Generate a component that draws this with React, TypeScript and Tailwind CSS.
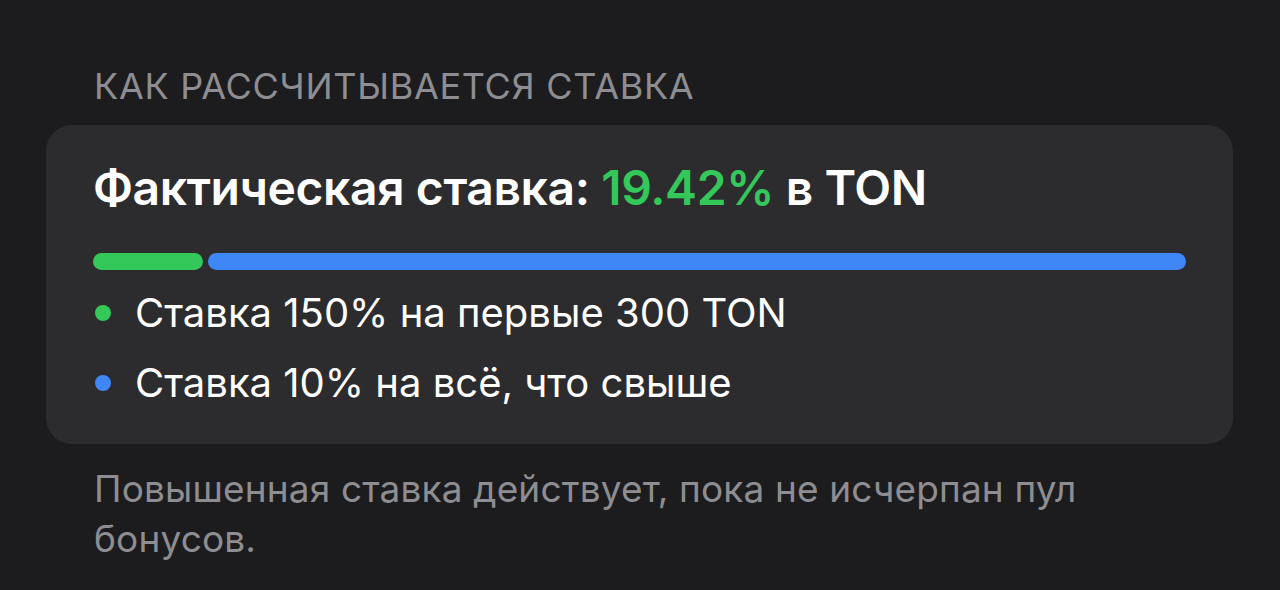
export default function App() {
  const items = [
    { color: "bg-[#34c759]", text: "Ставка 150% на первые 300 TON" },
    { color: "bg-[#3f86f7]", text: "Ставка 10% на всё, что свыше" },
  ];

  return (
    <div className="h-[590px] w-[1280px] bg-[#1c1c1e] px-[46px] pt-[64px] font-['Inter',sans-serif]">
      <h2 className="pl-[48px] text-[36px] leading-[44px] tracking-[0.7px] text-[#8d8d92] uppercase">
        Как рассчитывается ставка
      </h2>

      <div className="mt-[17px] h-[319px] w-[1187px] rounded-[26px] bg-[#2c2c2e] px-[47px] pt-[35px]">
        <div className="text-[48px] font-semibold leading-[56px] tracking-[-0.4px] text-white">
          Фактическая ставка: <span className="text-[#34c759]">19.42%</span>{" "}
          в TON
        </div>

        <div className="mt-[37px] flex h-[17px] gap-[5px]">
          <div className="w-[110px] rounded-full bg-[#34c759]" />
          <div className="flex-1 rounded-full bg-[#3f86f7]" />
        </div>

        <div className="mt-[20px] space-y-[24px]">
          {items.map((item) => (
            <div key={item.text} className="flex items-center">
              <span className={`ml-[2px] h-[16px] w-[16px] rounded-full ${item.color}`} />
              <span className="ml-[24px] text-[40px] leading-[46px] text-white">
                {item.text}
              </span>
            </div>
          ))}
        </div>
      </div>

      <p className="mt-[20px] pl-[48px] text-[37px] leading-[50px] tracking-[0.15px] text-[#8d8d92]">
        Повышенная ставка действует, пока не исчерпан пул
        <br />
        бонусов.
      </p>
    </div>
  );
}
